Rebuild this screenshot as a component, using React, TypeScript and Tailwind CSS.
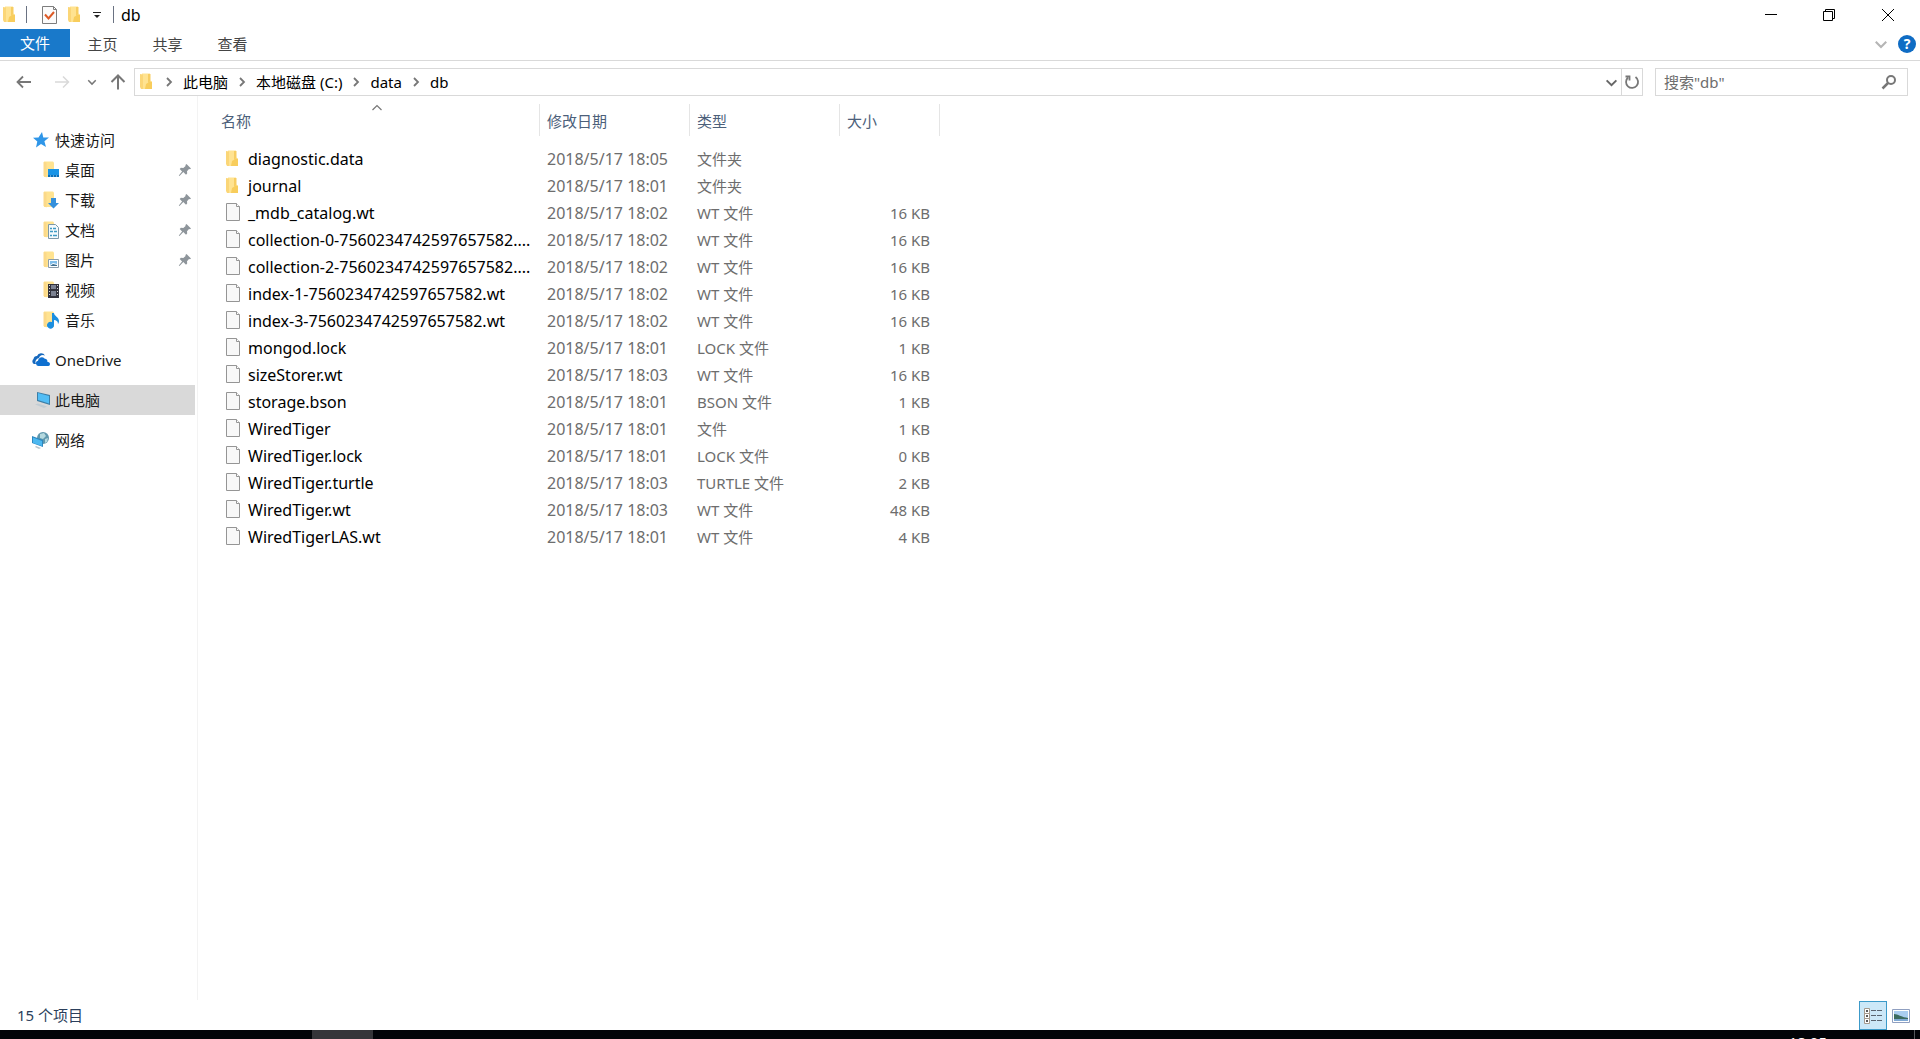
import type { ReactNode } from "react";

type FileRow = {
  name: string;
  date: string;
  type: string;
  size?: string;
};

type NavEntry = {
  label: string;
  icon: ReactNode;
  pinned?: boolean;
};

const files: FileRow[] = [
  { name: "diagnostic.data", date: "2018/5/17 18:05", type: "文件夹" },
  { name: "journal", date: "2018/5/17 18:01", type: "文件夹" },
  { name: "_mdb_catalog.wt", date: "2018/5/17 18:02", type: "WT 文件", size: "16 KB" },
  { name: "collection-0-7560234742597657582....", date: "2018/5/17 18:02", type: "WT 文件", size: "16 KB" },
  { name: "collection-2-7560234742597657582....", date: "2018/5/17 18:02", type: "WT 文件", size: "16 KB" },
  { name: "index-1-7560234742597657582.wt", date: "2018/5/17 18:02", type: "WT 文件", size: "16 KB" },
  { name: "index-3-7560234742597657582.wt", date: "2018/5/17 18:02", type: "WT 文件", size: "16 KB" },
  { name: "mongod.lock", date: "2018/5/17 18:01", type: "LOCK 文件", size: "1 KB" },
  { name: "sizeStorer.wt", date: "2018/5/17 18:03", type: "WT 文件", size: "16 KB" },
  { name: "storage.bson", date: "2018/5/17 18:01", type: "BSON 文件", size: "1 KB" },
  { name: "WiredTiger", date: "2018/5/17 18:01", type: "文件", size: "1 KB" },
  { name: "WiredTiger.lock", date: "2018/5/17 18:01", type: "LOCK 文件", size: "0 KB" },
  { name: "WiredTiger.turtle", date: "2018/5/17 18:03", type: "TURTLE 文件", size: "2 KB" },
  { name: "WiredTiger.wt", date: "2018/5/17 18:03", type: "WT 文件", size: "48 KB" },
  { name: "WiredTigerLAS.wt", date: "2018/5/17 18:01", type: "WT 文件", size: "4 KB" },
];

const FolderIcon = () => (
  <svg width="16" height="18" viewBox="0 0 16 18">
    <path d="M3 .5h8v7l2 1V16H3z" fill="#ffe391" />
    <path d="M1 1l3 .5V16H2L1 14z" fill="#fbd677" />
    <path d="M9 1h2.500v7L9 10z" fill="#f7cd62" />
    <path d="M7 11l4-2.500 2 .5v7H6z" fill="#f8cd5c" />
  </svg>
);

const FileIcon = () => (
  <svg width="16" height="19" viewBox="0 0 16 19">
    <path d="M1.500.5h10l3 3v14h-13z" fill="#f8f8f8" stroke="#959595" />
    <path d="M11.500.5v3h3" fill="#fff" stroke="#959595" />
  </svg>
);

// folder with a smaller glyph laid over its lower right corner
const BadgeFolder = ({ children }: { children?: ReactNode }) => (
  <svg width="18" height="18" viewBox="0 0 18 18">
    <path d="M2 .5h9l1 1V16H2z" fill="#ffe391" />
    <path d="M1.500 1l3 .5V16.500l-3-1.500z" fill="#fbd98a" />
    {children}
  </svg>
);

const PinIcon = () => (
  <svg width="14" height="14" viewBox="0 0 14 14" fill="#8e959b">
    <path d="M8.500 1L13 5.500l-1 .7-1-.2-2 2.200.2 2.300-1.200 1.200-2.700-2.700L1.500 13l-.7-.6 3.300-4L1.700 6l1.200-1.200 2.400.2 2.300-2-.2-1z" />
  </svg>
);

const Chevron = ({ dir, color, size }: { dir: "up" | "down" | "right"; color: string; size: number }) => (
  <svg width={size} height={size} viewBox="0 0 12 12" fill="none" stroke={color} strokeWidth={dir === "up" ? 1.2 : 1.8}>
    {dir === "down" && <path d="M1.500 4L6 8.500 10.500 4" />}
    {dir === "up" && <path d="M1.500 8L6 3.500 10.500 8" />}
    {dir === "right" && <path d="M4 2l4 4-4 4" />}
  </svg>
);

const quickAccess: NavEntry[] = [
  {
    label: "桌面",
    pinned: true,
    icon: (
      <BadgeFolder>
        <path d="M6 8h11v8H6z" fill="#1a94e6" />
        <path d="M6 14h11v2H6z" fill="#0b6fb8" />
        <path d="M8 15h1M11 15h1M14 15h1" stroke="#bfe3fa" />
      </BadgeFolder>
    ),
  },
  {
    label: "下载",
    pinned: true,
    icon: (
      <BadgeFolder>
        <path d="M9 7h5v5h3l-5.500 5.500L6 12h3z" fill="#3590dc" />
      </BadgeFolder>
    ),
  },
  {
    label: "文档",
    pinned: true,
    icon: (
      <BadgeFolder>
        <path d="M6.500 3.500h7l3 3v11h-10z" fill="#f4fafd" stroke="#7c98a8" />
        <path d="M8 7.500h2M11 7.500h3M8 10.500h3M12 10.500h3M8 14.500h2M11 14.500h4" stroke="#3e9ac4" strokeWidth="1.500" />
      </BadgeFolder>
    ),
  },
  {
    label: "图片",
    pinned: true,
    icon: (
      <BadgeFolder>
        <path d="M6.500 8.500h10v8h-10z" fill="#fff" stroke="#8b9dab" />
        <path d="M8 10h7v3l-4-1-3 2z" fill="#7fbdea" />
        <path d="M8 15l3-2 4 1v1z" fill="#3d6f92" />
      </BadgeFolder>
    ),
  },
  {
    label: "视频",
    icon: (
      <BadgeFolder>
        <path d="M6 3h11v14H6z" fill="#33333d" />
        <path d="M9 4h5v4H9zM9 10h5v5H9z" fill="#7c8292" />
        <path d="M7.500 4v12M15.500 4v12" stroke="#d8d8d8" strokeDasharray="1 2" />
      </BadgeFolder>
    ),
  },
  {
    label: "音乐",
    icon: (
      <BadgeFolder>
        <path d="M10 2h2c0 3 5 4 5 8 0 2-1 3-1 3 0-3-2-4-4-4v5a3.500 3.500 0 1 1-2-3z" fill="#1c8fe0" />
      </BadgeFolder>
    ),
  },
];

const StarIcon = () => (
  <svg width="18" height="18" viewBox="0 0 18 18">
    <path d="M10 1l1.300 5.500 5.700.1-4.600 3.600 1.600 5.800-5-3L4 16.500l1.300-6L1 6.800l5.500-.3z" fill="#2f96e8" />
  </svg>
);

const CloudIcon = () => (
  <svg width="19" height="14" viewBox="0 0 19 14">
    <path d="M5 11H3a3 3 0 0 1-.5-5A3.500 3.500 0 0 1 6 3a4.500 4.500 0 0 1 8-.5A4 4 0 0 0 8 5a4 4 0 0 0-3 6z" fill="#1668bd" />
    <path d="M8 13a2.700 2.700 0 0 1-1-5.300A3.700 3.700 0 0 1 13.500 5.500 3.500 3.500 0 0 1 16.500 9a2 2 0 0 1 .8 4z" fill="#0f70d0" />
  </svg>
);

const ComputerIcon = () => (
  <svg width="18" height="18" viewBox="0 0 18 18">
    <path d="M5 1l13 3v10L5 10z" fill="#3d7ea6" />
    <path d="M6 2l11 3v7.500L6 9z" fill="#52bdf5" />
    <path d="M3 13.500l3-1 9 3-3 1.500z" fill="#c2cdd4" />
  </svg>
);

const NetworkIcon = () => (
  <svg width="19" height="18" viewBox="0 0 19 18">
    <circle cx="12" cy="7" r="6" fill="#5f97ad" />
    <path d="M9 3l4-1 2 3-3 3-3-1zM14 8l3-1-1 4-2 1z" fill="#b5d9df" />
    <path d="M1 5l11 4v7L1 12z" fill="#2c87bf" />
    <path d="M2 6.500L11 10v5l-9-3z" fill="#4cb8f0" />
    <path d="M5 15l5 2-2 1-4-2z" fill="#b9c4ca" />
  </svg>
);

const TitleBar = () => (
  <header className="flex h-[29px] items-center">
    <div className="flex items-center pl-[2px]">
      <FolderIcon />
      <span className="ml-2 h-[17px] w-px bg-gray-500" />
      <button aria-label="属性" className="ml-[15px]">
        <svg width="15" height="18" viewBox="0 0 15 18">
          <path d="M.5.5h11l3 3v14H.5z" fill="#fbfbfb" stroke="#7d7d7d" />
          <path d="M11.500.5v3h3" fill="none" stroke="#7d7d7d" />
          <path d="M3 8.500l3.500 4L12 6" fill="none" stroke="#dd5a26" strokeWidth="2" />
        </svg>
      </button>
      <button aria-label="新建文件夹" className="ml-[10px]">
        <FolderIcon />
      </button>
      <button aria-label="自定义快速访问工具栏" className="ml-[10px]">
        <svg width="8" height="8" viewBox="0 0 8 8">
          <path d="M0 1.500h8" stroke="#222" />
          <path d="M1 4h6L4 7z" fill="#222" />
        </svg>
      </button>
      <span className="ml-3 h-[17px] w-px bg-gray-500" />
    </div>
    <h1 className="ml-[7px] text-base leading-5">db</h1>
    <div className="ml-auto flex">
      <button aria-label="最小化" className="flex h-7 w-[58px] items-center justify-center">
        <svg width="12" height="12" viewBox="0 0 12 12" stroke="#000">
          <path d="M0 5.500h12" />
        </svg>
      </button>
      <button aria-label="还原" className="flex h-7 w-[58px] items-center justify-center">
        <svg width="12" height="12" viewBox="0 0 12 12" fill="none" stroke="#000">
          <path d="M.5 2.500h9v9h-9zM2.500 2.500v-2h9v9h-2" />
        </svg>
      </button>
      <button aria-label="关闭" className="mr-[2px] flex h-7 w-[60px] items-center justify-center">
        <svg width="12" height="12" viewBox="0 0 12 12" stroke="#000">
          <path d="M0 0l12 12M12 0L0 12" />
        </svg>
      </button>
    </div>
  </header>
);

const Ribbon = () => (
  <div className="flex h-8 items-start border-b border-[#d9d9d9]">
    <button className="h-7 w-[70px] bg-[#1979ca] text-white">文件</button>
    <button className="h-[30px] w-[65px] text-[#444]">主页</button>
    <button className="h-[30px] w-[65px] text-[#444]">共享</button>
    <button className="h-[30px] w-[65px] text-[#444]">查看</button>
    <div className="ml-auto flex h-[30px] items-center gap-[10px] pr-1">
      <button aria-label="展开功能区">
        <Chevron dir="down" color="#b5b5b5" size={14} />
      </button>
      <button
        aria-label="帮助"
        className="flex size-[18px] items-center justify-center rounded-full bg-[#0f6cc4] text-sm font-bold text-white"
      >
        ?
      </button>
    </div>
  </div>
);

const crumbs = ["此电脑", "本地磁盘 (C:)", "data", "db"];

const AddressBar = () => (
  <div className="flex h-[35px] items-end pr-3">
    <div className="flex h-7 w-[134px] shrink-0 items-center pl-4">
      <button aria-label="后退">
        <svg width="16" height="14" viewBox="0 0 16 14" fill="none" stroke="#777" strokeWidth="1.800">
          <path d="M15 7H1.500M7 1.500L1.500 7 7 12.500" />
        </svg>
      </button>
      <button aria-label="前进" className="ml-[22px]">
        <svg width="16" height="14" viewBox="0 0 16 14" fill="none" stroke="#d9d9d9" strokeWidth="1.500">
          <path d="M1 7h13.500M9 1.500L14.500 7 9 12.500" />
        </svg>
      </button>
      <button aria-label="最近浏览的位置" className="ml-[17px]">
        <Chevron dir="down" color="#777" size={10} />
      </button>
      <button aria-label="上移" className="ml-[13px]">
        <svg width="16" height="16" viewBox="0 0 16 16" fill="none" stroke="#777" strokeWidth="2">
          <path d="M8 15.500V2M1.500 8L8 1.500 14.500 8" />
        </svg>
      </button>
    </div>
    <div className="flex h-7 grow items-center border border-[#d9d9d9]">
      <span className="ml-1 flex">
        <FolderIcon />
      </span>
      {crumbs.map((crumb) => (
        <div key={crumb} className="flex items-center">
          <span className="mx-2">
            <Chevron dir="right" color="#777" size={12} />
          </span>
          <button className="whitespace-nowrap">{crumb}</button>
        </div>
      ))}
      <button aria-label="以前的位置" className="ml-auto mr-[3px]">
        <Chevron dir="down" color="#666" size={13} />
      </button>
      <button aria-label="刷新" className="flex h-full w-[21px] items-center justify-center border-l border-[#d9d9d9]">
        <svg width="16" height="16" viewBox="0 0 16 16" fill="none" stroke="#777" strokeWidth="1.800">
          <path d="M11.500 3a6 6 0 1 1-7.500.5" />
          <path d="M1.500 2.500h4v4" />
        </svg>
      </button>
    </div>
    <label className="ml-3 flex h-7 w-[253px] shrink-0 items-center border border-[#d9d9d9] pl-2 pr-[10px]">
      <input
        type="text"
        aria-label="搜索"
        placeholder='搜索"db"'
        className="w-full min-w-0 outline-none placeholder:text-[#6d6d6d]"
      />
      <svg width="16" height="16" viewBox="0 0 16 16" fill="none" stroke="#777" strokeWidth="2" className="shrink-0">
        <circle cx="10" cy="6" r="4" />
        <path d="M7 9l-5.500 5.500" strokeWidth="2.500" />
      </svg>
    </label>
  </div>
);

const NavLink = ({ label, icon, pinned, className }: NavEntry & { className: string }) => (
  <a href="#" className={`flex h-[30px] w-[195px] items-center text-[#1a1a1a] ${className}`}>
    <span className="mr-[5px] flex">{icon}</span>
    {label}
    {pinned && (
      <span className="ml-auto mr-[3px]">
        <PinIcon />
      </span>
    )}
  </a>
);

const Sidebar = () => (
  <nav className="w-[198px] shrink-0 border-r border-[#f3f3f3] pt-[29px]">
    <NavLink label="快速访问" icon={<StarIcon />} className="pl-8" />
    {quickAccess.map((el) => (
      <NavLink key={el.label} {...el} className="pl-[42px]" />
    ))}
    <NavLink label="OneDrive" icon={<CloudIcon />} className="mt-[10px] pl-[31px]" />
    <NavLink label="此电脑" icon={<ComputerIcon />} className="mt-[10px] bg-[#d9d9d9] pl-8" />
    <NavLink label="网络" icon={<NetworkIcon />} className="mt-[10px] pl-[31px]" />
  </nav>
);

const FileTable = () => (
  <main className="grow pt-2">
    <table className="w-[742px] table-fixed border-separate border-spacing-0 text-left text-[#6d6d6d]">
      <thead className="text-[#4c607a]">
        <tr className="h-8">
          <th className="relative w-[342px] border-r border-[#e5e5e5] pt-[2px] pl-[23px] font-normal">
            名称
            <span className="absolute -top-[2px] left-[173px]">
              <Chevron dir="up" color="#777" size={12} />
            </span>
          </th>
          <th className="w-[150px] border-r border-[#e5e5e5] pt-[2px] pl-[7px] font-normal">修改日期</th>
          <th className="w-[150px] border-r border-[#e5e5e5] pt-[2px] pl-[7px] font-normal">类型</th>
          <th className="w-[100px] border-r border-[#e5e5e5] pt-[2px] pl-[7px] font-normal">大小</th>
        </tr>
      </thead>
      <tbody>
        <tr className="h-[9px]" />
        {files.map((el) => (
          <tr key={el.name} className="h-[27px]">
            <td className="p-0 pl-[27px] text-base leading-5 text-black">
              <div className="flex items-center gap-[7px] whitespace-nowrap">
                {el.size ? <FileIcon /> : <FolderIcon />}
                {el.name}
              </div>
            </td>
            <td className="p-0 pl-[7px] text-base leading-5">{el.date}</td>
            <td className="p-0 pl-[7px]">{el.type}</td>
            <td className="p-0 pr-[10px] text-right">{el.size}</td>
          </tr>
        ))}
      </tbody>
    </table>
  </main>
);

const StatusBar = () => (
  <footer className="flex h-[30px] items-end justify-between pl-[17px] pr-[10px] text-[#2b3f5c]">
    <span className="leading-[29px]">15 个项目</span>
    <div className="flex items-center gap-[5px]">
      <button aria-label="详细信息" className="flex h-[29px] w-7 items-center justify-center border border-[#3c9ac9] bg-[#cce8f8]">
        <svg width="20" height="16" viewBox="0 0 20 16" fill="none">
          <path d="M1.500.5h5v5h-5zM1.500 5.500h5v5h-5zM1.500 10.500h5v5h-5z" fill="#fff" stroke="#a59a8e" />
          <path d="M3 3h2M3 8h2M3 13h2" stroke="#5a5a5a" strokeWidth="2" />
          <path d="M8 2.500h5M14 2.500h5M8 7.500h5M14 7.500h5M8 12.500h5M14 12.500h5" stroke="#5a6470" />
        </svg>
      </button>
      <button aria-label="大图标">
        <svg width="18" height="14" viewBox="0 0 18 14">
          <path d="M.5.5h17v13H.5z" fill="#fff" stroke="#8f9fc0" />
          <path d="M2 2h14v10H2z" fill="#a9cdf0" />
          <path d="M2 5c4 0 7 3 14 4v1H2z" fill="#3c6b60" />
          <path d="M2 10h14v2H2z" fill="#7fa9d4" />
        </svg>
      </button>
    </div>
  </footer>
);

const Taskbar = () => (
  <div className="flex h-[9px] items-start overflow-hidden bg-[#020408] text-white">
    <div className="ml-[312px] h-full w-[61px] bg-[#353539]" />
    <time className="ml-auto mr-[87px] mt-1 leading-4">18:05</time>
    <div className="mr-[5px] h-full w-px bg-[#55585c]" />
  </div>
);

const App = () => (
  <div className="flex min-h-screen flex-col bg-white font-['Noto_Sans','Noto_Sans_CJK_SC',sans-serif] text-[15px] leading-5 text-black">
    <TitleBar />
    <Ribbon />
    <AddressBar />
    <div className="flex grow">
      <Sidebar />
      <FileTable />
    </div>
    <StatusBar />
    <Taskbar />
  </div>
);

export default App;
